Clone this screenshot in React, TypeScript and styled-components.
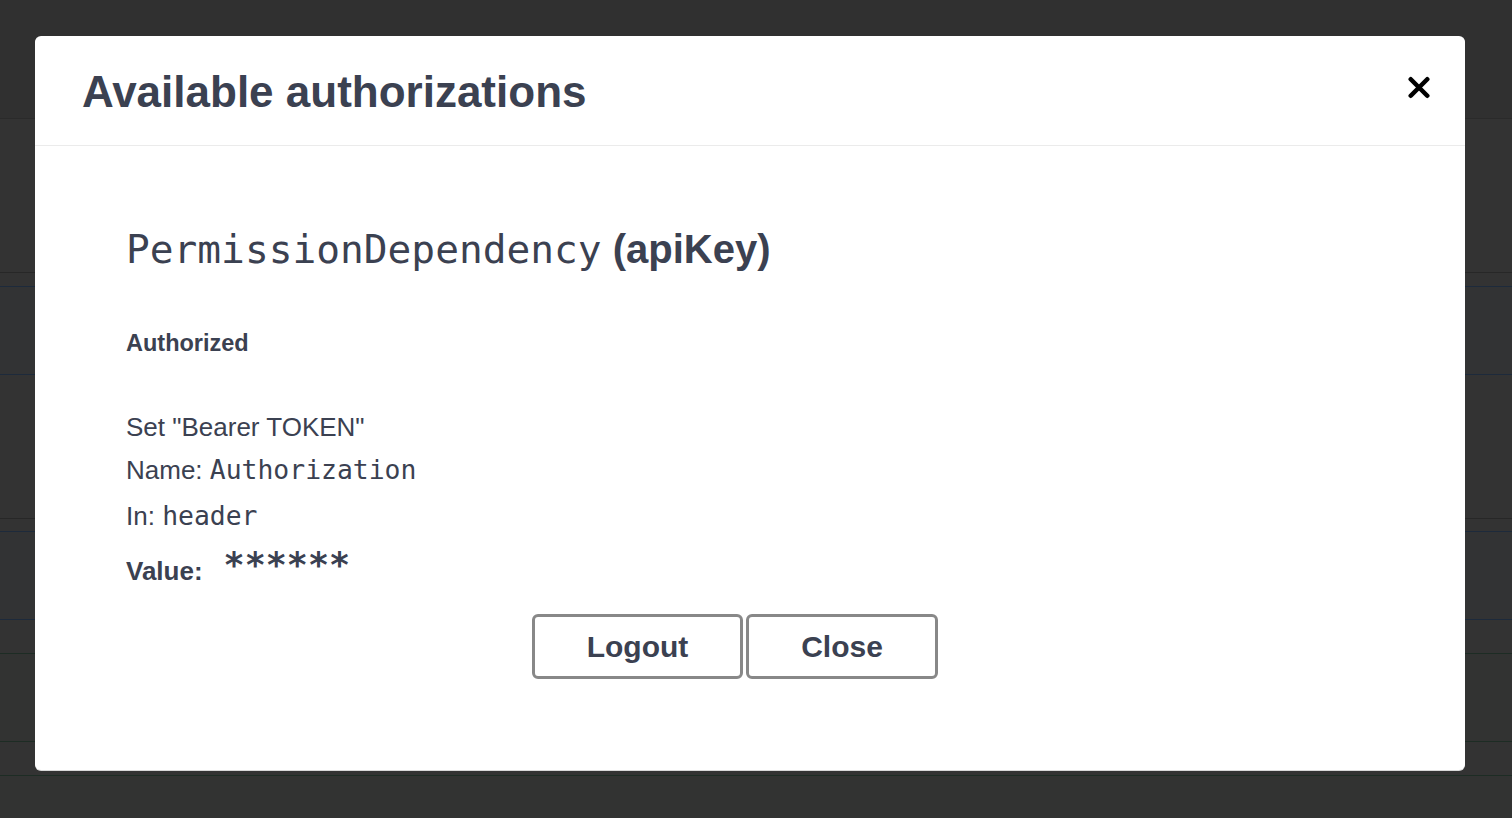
import React from 'react';
import styled, { createGlobalStyle } from 'styled-components';

const GlobalStyle = createGlobalStyle`
  html, body {
    margin: 0;
    padding: 0;
    height: 100%;
    overflow: hidden;
  }
  body {
    font-family: "Liberation Sans", Arial, sans-serif;
    background: #333333;
  }
`;

// dimmed page behind the dialog

const Page = styled.div`
  position: relative;
  width: 1512px;
  height: 818px;
  background: #333333;
  overflow: hidden;
`;

const TopStrip = styled.div`
  height: 118px;
  background: #303030;
  border-bottom: 1px solid #2a2a2a;
`;

const TagHeader = styled.div<{ $h: number }>`
  height: ${p => p.$h}px;
  border-bottom: 1px solid #272727;
`;

const OpBlock = styled.div<{ $kind: 'get' | 'post'; $gap: number; $h: number }>`
  margin-top: ${p => p.$gap}px;
  height: ${p => p.$h}px;
  border-top: 1px solid ${p => (p.$kind === 'get' ? '#1d2a3b' : '#1d2c24')};
  border-bottom: 1px solid ${p => (p.$kind === 'get' ? '#1d2a3b' : '#1d2c24')};
  background: ${p => (p.$kind === 'get' ? '#323334' : '#323332')};
`;

// dialog

const Modal = styled.div`
  position: absolute;
  top: 36px;
  left: 35px;
  width: 1430px;
  height: 734px;
  background: #ffffff;
  border-radius: 6px;
  box-shadow: 0 1px 0 #d9d9d9;
  display: flex;
  flex-direction: column;
  color: #3b4151;
`;

const Header = styled.div`
  display: flex;
  align-items: center;
  justify-content: space-between;
  padding: 30px 35px 27px 47px;
  border-bottom: 1px solid #ebebeb;
`;

const Title = styled.h3`
  margin: 0;
  font-size: 44px;
  line-height: 52px;
  font-weight: 700;
  color: #3b4151;
`;

const CloseButton = styled.button`
  border: 0;
  background: none;
  padding: 0;
  margin-top: -10px;
  width: 22px;
  height: 23px;
  display: flex;
  cursor: pointer;
`;

const Body = styled.div`
  padding: 79px 121px 0 91px;
  display: flex;
  flex-direction: column;
`;

const AuthName = styled.h4`
  margin: 0;
  font-size: 40px;
  line-height: 48px;
  font-weight: 700;
  color: #3b4151;
`;

const Mono = styled.code<{ $size: number }>`
  font-family: "DejaVu Sans Mono", "Liberation Mono", monospace;
  font-weight: 400;
  font-size: ${p => p.$size}px;
  color: #3b4151;
`;

const Status = styled.h6`
  margin: 56px 0 0;
  font-size: 23.5px;
  line-height: 28px;
  font-weight: 700;
  color: #3b4151;
`;

const Line = styled.p<{ $gap: number }>`
  margin: ${p => p.$gap}px 0 0;
  font-size: 26px;
  line-height: 30px;
  height: 30px;
  color: #3b4151;
`;

const ValueRow = styled.div`
  margin-top: 22px;
  display: flex;
  align-items: baseline;
  height: 30px;
  line-height: 30px;
`;

const ValueLabel = styled.label`
  font-size: 26px;
  font-weight: 700;
  color: #3b4151;
  margin-right: 21px;
`;

const Masked = styled.span`
  font-family: "DejaVu Sans Mono", "Liberation Mono", monospace;
  font-size: 35px;
  font-weight: 700;
  color: #3b4151;
  position: relative;
  top: -3px;
`;

const ButtonRow = styled.div`
  margin-top: 31px;
  display: flex;
  justify-content: center;
  gap: 3px;
`;

const Button = styled.button<{ $w: number }>`
  width: ${p => p.$w}px;
  height: 65px;
  border: 3px solid #888888;
  border-radius: 6px;
  background: #ffffff;
  font-family: "Liberation Sans", Arial, sans-serif;
  font-size: 30px;
  font-weight: 700;
  color: #3b4151;
  cursor: pointer;
`;

const CloseIcon = () => (
  <svg width="22" height="23" viewBox="0 0 24 24" fill="none">
    <path d="M3 3 L21 21 M21 3 L3 21" stroke="#000" strokeWidth="5" strokeLinecap="round" />
  </svg>
);

export default function App() {
  return (
    <>
      <GlobalStyle />
      <Page>
        <TopStrip />
        <TagHeader $h={153} />
        <OpBlock $kind="get" $gap={13} $h={87} />
        <TagHeader $h={143} />
        <OpBlock $kind="get" $gap={12} $h={87} />
        <OpBlock $kind="post" $gap={33} $h={87} />
        <OpBlock $kind="post" $gap={33} $h={87} />

        <Modal>
          <Header>
            <Title>Available authorizations</Title>
            <CloseButton aria-label="close">
              <CloseIcon />
            </CloseButton>
          </Header>
          <Body>
            <AuthName>
              <Mono $size={39.5}>PermissionDependency</Mono> (apiKey)
            </AuthName>
            <Status>Authorized</Status>
            <Line $gap={55}>Set "Bearer TOKEN"</Line>
            <Line $gap={13}>
              Name: <Mono $size={26.4}>Authorization</Mono>
            </Line>
            <Line $gap={16}>
              In: <Mono $size={26.4}>header</Mono>
            </Line>
            <ValueRow>
              <ValueLabel>Value:</ValueLabel>
              <Masked>******</Masked>
            </ValueRow>
            <ButtonRow>
              <Button $w={211}>Logout</Button>
              <Button $w={192}>Close</Button>
            </ButtonRow>
          </Body>
        </Modal>
      </Page>
    </>
  );
}
